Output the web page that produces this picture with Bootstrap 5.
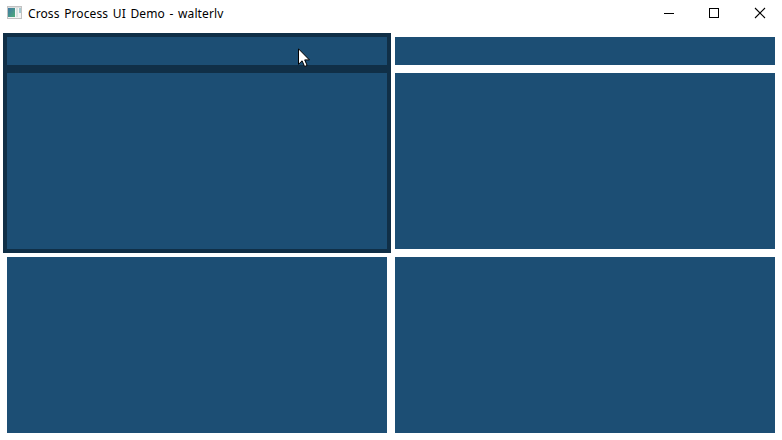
<!DOCTYPE html>
<html lang="en">
<head>
<meta charset="utf-8">
<title>Cross Process UI Demo - walterlv</title>
<link href="https://cdn.jsdelivr.net/npm/bootstrap@5.3.0/dist/css/bootstrap.min.css" rel="stylesheet">
<style>
  body { width: 782px; height: 440px; overflow: hidden; font-family: "Noto Sans", "Open Sans", sans-serif; }
  .titlebar { height: 33px; padding-left: 7px; padding-bottom: 7px; }
  .app-icon { margin-right: 5px; }
  .window-title { font-size: 12px; line-height: 26px; color: #000; white-space: nowrap; letter-spacing: .1px; word-spacing: 1.4px; }
  .window-title span { display: inline-block; padding-top: 1px; }
  .caption-btn { width: 46px; height: 26px; border-radius: 0; }
  .panes { padding: 0 3px; }
  .pane { padding: 4px; gap: 8px; }
  .pane-top { height: 220px; }
  .pane-bottom { height: 184px; }
  .pane-active { background: #102f47; }
  .strip { height: 28px; background: #1c4e74; }
  .surface { background: #1c4e74; }
  .pointer { left: 298px; top: 48px; }
</style>
</head>
<body class="bg-white position-relative">
<header class="titlebar d-flex align-items-center">
  <svg class="app-icon flex-shrink-0" width="16" height="26" viewBox="0 0 16 26" shape-rendering="crispEdges">
    <defs><linearGradient id="screen" x1="0" y1="0" x2="1" y2="1"><stop offset="0" stop-color="#3f78a5"/><stop offset="1" stop-color="#4eac78"/></linearGradient></defs>
    <rect x="0" y="6" width="15" height="13" fill="#c2c2c2"/>
    <rect x="1" y="7" width="13" height="11" fill="#f5f5f5"/>
    <rect x="1" y="7" width="13" height="1" fill="#dedede"/>
    <rect x="1" y="8" width="7" height="9" fill="url(#screen)"/>
    <rect x="9" y="8" width="2" height="9" fill="#d8e2e0"/>
    <rect x="12" y="8" width="2" height="5" fill="#a5cbd2"/>
  </svg>
  <div class="window-title me-auto"><span>Cross Process UI Demo - walterlv</span></div>
  <button class="caption-btn btn p-0 border-0 d-flex" aria-label="Minimize">
    <svg width="46" height="26" shape-rendering="crispEdges"><path d="M20 13h10v1H20z" fill="#000"/></svg>
  </button>
  <button class="caption-btn btn p-0 border-0 d-flex" aria-label="Maximize">
    <svg width="46" height="26" shape-rendering="crispEdges"><rect x="19.5" y="8.5" width="9" height="9" fill="none" stroke="#000"/></svg>
  </button>
  <button class="caption-btn btn p-0 border-0 d-flex" aria-label="Close">
    <svg width="46" height="26"><path d="M19 8l10 10M29 8L19 18" fill="none" stroke="#000" stroke-width="1.1"/></svg>
  </button>
</header>
<main class="panes">
  <div class="row g-0">
    <div class="col-6"><section class="pane pane-top pane-active d-flex flex-column"><div class="strip"></div><div class="surface flex-grow-1"></div></section></div>
    <div class="col-6"><section class="pane pane-top d-flex flex-column"><div class="strip"></div><div class="surface flex-grow-1"></div></section></div>
    <div class="col-6"><section class="pane pane-bottom d-flex"><div class="surface flex-grow-1"></div></section></div>
    <div class="col-6"><section class="pane pane-bottom d-flex"><div class="surface flex-grow-1"></div></section></div>
  </div>
</main>
<!-- mouse pointer -->
<svg class="pointer position-absolute" width="13" height="20" viewBox="0 0 13 20"><path d="M.5 .8V16.3L4.1 12.8L6.6 18.5L9.1 17.4L6.7 11.9H11.4Z" fill="#fff" stroke="#000" stroke-width="1"/></svg>
<script src="https://cdn.jsdelivr.net/npm/bootstrap@5.3.0/dist/js/bootstrap.bundle.min.js"></script>
</body>
</html>
